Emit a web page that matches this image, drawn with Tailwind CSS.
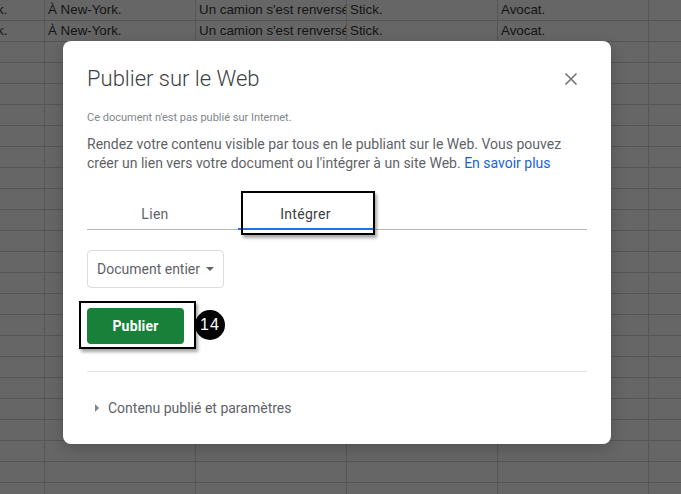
<!DOCTYPE html>
<html lang="fr">
<head>
    <meta charset="UTF-8">
    <title>Publier sur le Web</title>
    <script src="https://cdn.jsdelivr.net/npm/@tailwindcss/browser@4"></script>
</head>
<body class="w-[681px] h-[494px] overflow-hidden bg-[#666666] relative font-['Roboto',sans-serif]">
    <!-- sheet behind the dialog -->
    <div id="sheet" class="w-[681px] h-[494px] overflow-hidden font-['Liberation_Sans',sans-serif] text-[13.33px] text-[#141414]">
        <div class="flex h-[21px] leading-[20px] border-b border-[#565656]">
            <div class="w-[45px] shrink-0 border-r border-[#565656] overflow-hidden whitespace-nowrap -indent-[3px]">k.</div>
            <div class="w-[151px] shrink-0 border-r border-[#565656] pl-[3px]">À New-York.</div>
            <div class="w-[151px] shrink-0 border-r border-[#565656] pl-[3px] overflow-hidden whitespace-nowrap">Un camion s'est renversé</div>
            <div class="w-[151px] shrink-0 border-r border-[#565656] pl-[3px]">Stick.</div>
            <div class="w-[151px] shrink-0 border-r border-[#565656] pl-[3px]">Avocat.</div>
        </div>
        <div class="flex h-[21px] leading-[20px] border-b border-[#565656]">
            <div class="w-[45px] shrink-0 border-r border-[#565656] overflow-hidden whitespace-nowrap -indent-[3px]">k.</div>
            <div class="w-[151px] shrink-0 border-r border-[#565656] pl-[3px]">À New-York.</div>
            <div class="w-[151px] shrink-0 border-r border-[#565656] pl-[3px] overflow-hidden whitespace-nowrap">Un camion s'est renversé</div>
            <div class="w-[151px] shrink-0 border-r border-[#565656] pl-[3px]">Stick.</div>
            <div class="w-[151px] shrink-0 border-r border-[#565656] pl-[3px]">Avocat.</div>
        </div>
    </div>

    <!-- dialog -->
    <div class="absolute left-[63px] top-[41px] w-[548px] h-[403px] bg-white rounded-[8px] shadow-[0_4px_16px_rgba(0,0,0,0.2)] px-[24px] flex flex-col">
        <div class="flex items-center justify-between pt-[17px] h-[58px]">
            <h1 class="text-[22px] leading-[30px] text-[#3c4043] font-light">Publier sur le Web</h1>
            <svg class="w-[14px] h-[14px] mr-[9px]" viewBox="0 0 14 14" fill="none" stroke="#6f7276" stroke-width="1.6"><path d="M1.5 1.5 L12.5 12.5 M12.5 1.5 L1.5 12.5"/></svg>
        </div>
        <p class="mt-[12px] text-[11px] leading-[14px] text-[#80868b]">Ce document n'est pas publié sur Internet.</p>
        <p class="mt-[10px] text-[14px] leading-[19px] text-[#5f6368]">Rendez votre contenu visible par tous en le publiant sur le Web. Vous pouvez créer un lien vers votre document ou l'intégrer à un site Web. <a class="text-[#1a5fd6]">En savoir plus</a></p>

        <!-- tabs -->
        <div class="mt-[16px] flex h-[41px] border-b border-[#b5b7ba] text-[14px] tracking-[0.3px]">
            <div class="w-[136px] text-center text-[#5f6368] pt-[15px] leading-[20px]">Lien</div>
            <div class="w-[16px]"></div>
            <div class="w-[135px] -ml-[1px] text-center text-[#3c4043] pt-[15px] leading-[20px] h-[41px] border-b-2 border-[#1a73e8]">Intégrer</div>
        </div>

        <div class="mt-[20px] flex items-center w-[137px] h-[38px] border border-[#dadce0] rounded-[4px] pl-[9px] text-[14px] text-[#5f6368]">
            Document entier
            <span class="ml-[6px] w-0 h-0 border-x-[4px] border-x-transparent border-t-[4px] border-t-[#5f6368]"></span>
        </div>

        <div class="mt-[20px] w-[97px] h-[36px] bg-[#188038] rounded-[4px] flex items-center justify-center text-white text-[14px] font-bold tracking-[0.2px]">Publier</div>

        <div class="mt-[27px] border-t border-[#e2e3e4]"></div>

        <div class="mt-[26px] flex items-center text-[14px] text-[#5f6368] leading-[20px]">
            <span class="ml-[8px] mr-[9px] w-0 h-0 border-y-[4px] border-y-transparent border-l-[4px] border-l-[#80868b]"></span>
            Contenu publié et paramètres
        </div>
    </div>

    <!-- annotations over the dialog -->
    <div class="absolute left-[241px] top-[191px] w-[134px] h-[44px] border-2 border-black shadow-[2px_3px_3px_rgba(0,0,0,0.35)]"></div>
    <div class="absolute left-[79px] top-[301px] w-[117px] h-[48px] border-2 border-black shadow-[2px_3px_3px_rgba(0,0,0,0.35)]"></div>
    <div class="absolute left-[195px] top-[310px] w-[30px] h-[30px] rounded-full bg-black text-white text-[16px] tracking-[1px] leading-[30px] text-center font-['Liberation_Sans',sans-serif]">14</div>

    <script>
        // empty rows of the sheet
        const sheet = document.getElementById('sheet');
        for (let i = 0; i < 22; i++) {
            const row = document.createElement('div');
            row.className = 'flex h-[21px] border-b border-[#565656]';
            row.innerHTML = '<div class="w-[45px] shrink-0 border-r border-[#565656]"></div>'
                + '<div class="w-[151px] shrink-0 border-r border-[#565656]"></div>'.repeat(4);
            sheet.appendChild(row);
        }
    </script>
</body>
</html>
